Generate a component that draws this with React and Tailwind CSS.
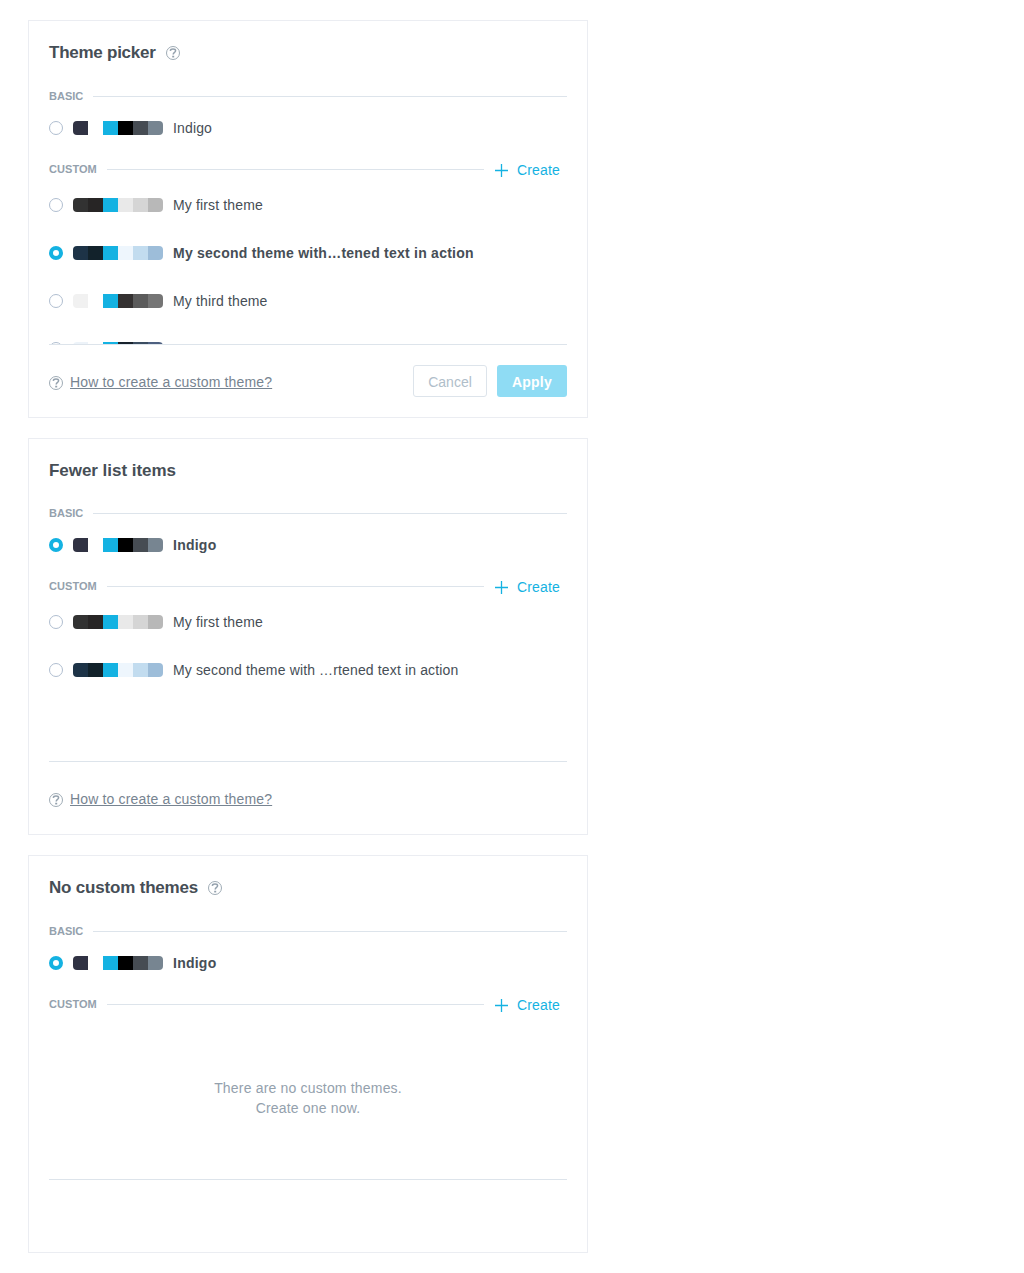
import React from "react";

const INDIGO = { name: "Indigo", colors: ["#303243", "#ffffff", "#14b2e2", "#000000", "#464c53", "#778591"] };
const FIRST = { name: "My first theme", colors: ["#323232", "#272525", "#14b2e2", "#e9e9e9", "#d5d5d5", "#b8b8b8"] };
const SECOND = ["#1d3347", "#12222b", "#14b2e2", "#eef6fd", "#c2dcef", "#9dbdd9"];
const THIRD = { name: "My third theme", colors: ["#f1f1f1", "#ffffff", "#14b2e2", "#343131", "#5b5b5b", "#757575"] };
const FOURTH = { name: "", colors: ["#edf3f9", "#ffffff", "#14b2e2", "#18222c", "#3b4d61", "#4e6080"] };

function HelpIcon() {
  return (
    <svg className="block h-3.5 w-3.5 shrink-0" viewBox="0 0 14 14" fill="none" stroke="#94a1ad">
      <circle cx="7" cy="7" r="6.5" strokeWidth="0.9" />
      <path d="M4.3 4.9C4.5 3.7 5.5 3.1 7 3.1s2.6.7 2.6 1.7c0 1.6-2.4 1.4-2.4 3.6" strokeWidth="1.5" />
      <path d="M6.2 10.6h2" strokeWidth="1.7" />
    </svg>
  );
}

function Section({ label, action }) {
  return (
    <div className="flex h-[19px] items-center">
      <span className={`text-[11px] leading-[19px] font-bold text-[#94a1ad] ${action ? "tracking-[0.06px]" : ""}`}>{label}</span>
      <div className="ml-2.5 h-px flex-1 bg-[#dde4eb]" />
      {action && (
        <button className="ml-2.5 flex w-[73px] items-center pt-px text-[14px] leading-5 tracking-[0.15px] text-[#14b2e2]">
          <svg className="mt-px mr-2 ml-px h-[13px] w-[14px]" viewBox="0 0 14 13" stroke="currentColor" strokeWidth="1.3">
            <path d="M0 6.5h13M6.5 0v13" />
          </svg>
          Create
        </button>
      )}
    </div>
  );
}

function Item({ theme, selected, basic }) {
  return (
    <div className={`flex items-center ${basic ? "h-11" : "h-12"}`}>
      <span
        className={
          selected
            ? "h-3.5 w-3.5 rounded-full border-4 border-[#14b2e2] bg-white"
            : "h-3.5 w-3.5 rounded-full border border-[#b0bed0] bg-white"
        }
      />
      <div className="ml-2.5 flex h-3.5 overflow-hidden rounded-[4px]">
        {theme.colors.map((color, i) => (
          <span key={i} className="w-[15px]" style={{ backgroundColor: color }} />
        ))}
      </div>
      <span className={`ml-2.5 text-[14px] leading-5 ${selected ? "font-bold tracking-[0.24px]" : "tracking-[0.14px]"}`}>
        {theme.name}
      </span>
    </div>
  );
}

function Picker({ title, titleTracking, titleHelp, basicSelected, themes, selected, link, buttons }) {
  return (
    <section className="h-[397.5px] w-[560px] border border-[#ebedf2] bg-white p-5">
      <h2 className="flex h-[23.5px] items-center gap-2.5 text-[17px] leading-[23.5px] font-bold">
        <span className={titleTracking}>{title}</span>
        {titleHelp && <HelpIcon />}
      </h2>
      <div className="mt-[22px]">
        <Section label="BASIC" />
        <Item theme={INDIGO} selected={basicSelected} basic />
      </div>
      <div className="mt-2.5">
        <Section label="CUSTOM" action />
      </div>
      <div className="mt-0.5 h-[163px] overflow-hidden">
        {themes.map((theme, i) => (
          <Item key={i} theme={theme} selected={i === selected} />
        ))}
        {themes.length === 0 && (
          <p className="flex h-full items-center justify-center pt-0.5 text-center text-[14px] leading-5 tracking-[0.18px] text-[#94a1ad]">
            There are no custom themes.
            <br />
            Create one now.
          </p>
        )}
      </div>
      <div className="flex h-[53px] items-end justify-between border-t border-[#dde4eb]">
        {link && (
          <div className="flex h-8 items-center gap-[7px] pt-1">
            <HelpIcon />
            <a className="-mt-0.5 text-[14px] leading-5 tracking-[0.155px] text-[#778491] underline">
              How to create a custom theme?
            </a>
          </div>
        )}
        {buttons && (
          <div className="flex gap-2.5 text-[14px]">
            <button className="h-8 w-[74px] rounded-[3px] border border-[#dde4eb] pt-1 text-[#b0beca]">Cancel</button>
            <button className="h-8 w-[70px] rounded-[3px] bg-[#8fdcf4] pt-1 font-bold tracking-[0.2px] text-white">Apply</button>
          </div>
        )}
      </div>
    </section>
  );
}

export default function App() {
  return (
    <main className="flex h-[1273px] flex-col gap-5 bg-white pt-5 pl-7 font-['Liberation_Sans',Arial,sans-serif] text-[#464e56]">
      <Picker
        title="Theme picker"
        titleTracking="tracking-[-0.25px]"
        titleHelp
        themes={[FIRST, { name: "My second theme with…tened text in action", colors: SECOND }, THIRD, FOURTH]}
        selected={1}
        link
        buttons
      />
      <Picker
        title="Fewer list items"
        titleTracking="tracking-[-0.04px]"
        basicSelected
        themes={[FIRST, { name: "My second theme with …rtened text in action", colors: SECOND }]}
        link
      />
      <Picker
        title="No custom themes"
        titleTracking="tracking-[-0.19px]"
        titleHelp
        basicSelected
        themes={[]}
      />
    </main>
  );
}
